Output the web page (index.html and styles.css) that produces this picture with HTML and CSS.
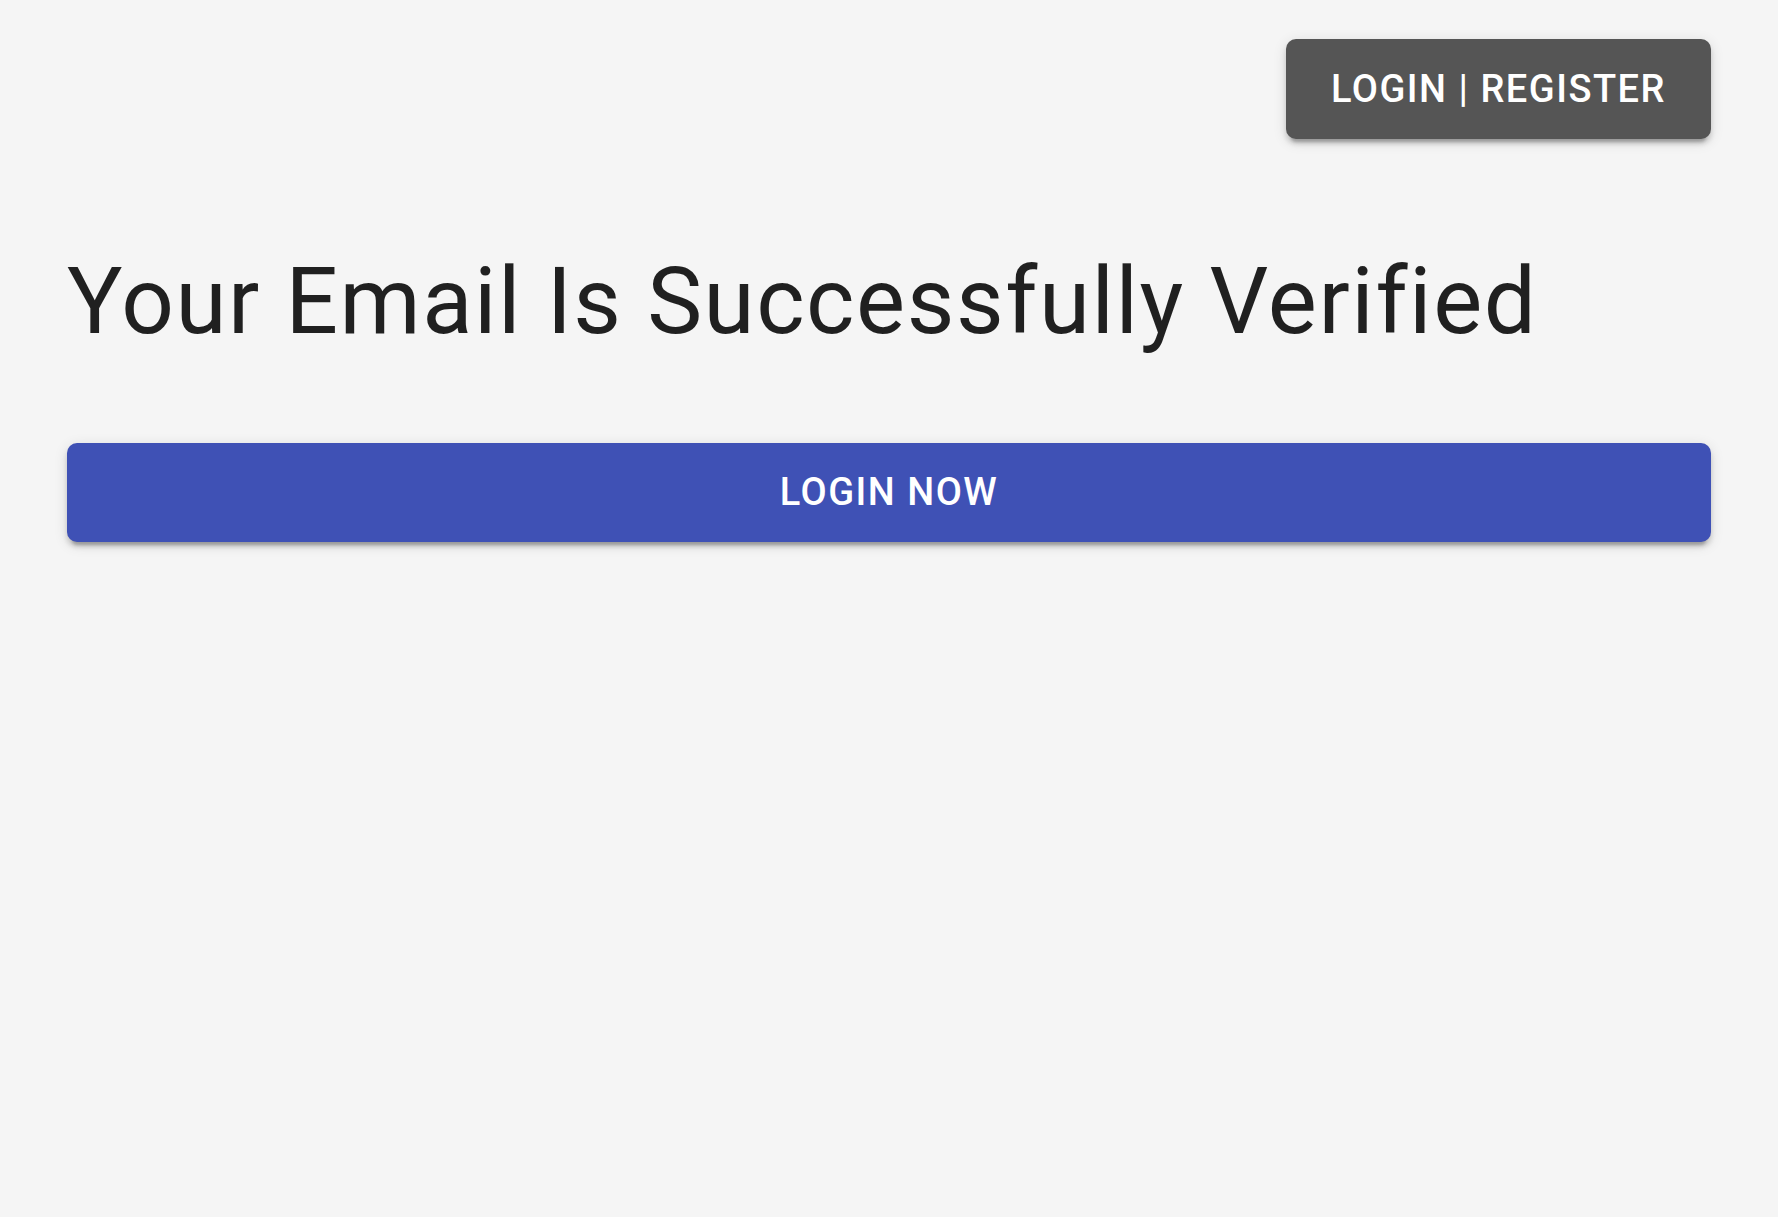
FILE: index.html
```html
<!DOCTYPE html>
<html lang="en">
<head>
<meta charset="utf-8">
<title>Email Verified</title>
<link rel="stylesheet" href="styles.css">
</head>
<body>
<div class="page">
  <header class="topbar">
    <button class="btn btn-dark">Login | Register</button>
  </header>
  <main class="content">
    <h1 class="title">Your Email Is Successfully Verified</h1>
    <button class="btn btn-primary btn-full">Login Now</button>
  </main>
</div>
</body>
</html>
```
FILE: styles.css
```css
html, body {
  margin: 0;
  padding: 0;
  background: #f5f5f5;
}
body {
  font-family: Roboto, "Noto Sans", sans-serif;
  color: rgba(0, 0, 0, 0.87);
}
.page {
  padding: 39px 67px;
  display: flex;
  flex-direction: column;
}
.topbar {
  display: flex;
  justify-content: flex-end;
}
.btn {
  font-family: Roboto, sans-serif;
  font-weight: 500;
  font-size: 38px;
  line-height: 1.75;
  letter-spacing: 1.5px;
  text-transform: uppercase;
  border: 0;
  border-radius: 10px;
  padding: 16.5px 45px;
  color: #fff;
  cursor: pointer;
  box-shadow: 0 8px 3px -5px rgba(0,0,0,0.2), 0 5px 5px 0 rgba(0,0,0,0.14), 0 3px 14px 0 rgba(0,0,0,0.12);
}
.btn-dark {
  background: #555555;
}
.btn-primary {
  background: #3f51b5;
}
.btn-full {
  width: 100%;
}
.content {
  display: flex;
  flex-direction: column;
}
.title {
  margin: 106px 0 84px;
  font-size: 92.5px;
  font-weight: 400;
  line-height: 1.235;
  letter-spacing: 1.55px;
}
```
